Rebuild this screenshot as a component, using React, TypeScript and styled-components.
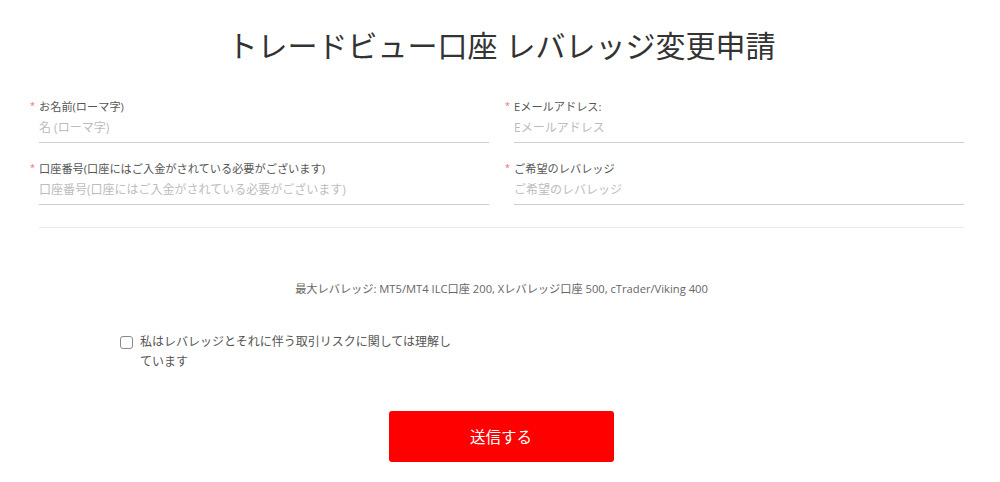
import React, { useState } from "react";
import styled, { createGlobalStyle } from "styled-components";

const GlobalStyle = createGlobalStyle`
  * {
    box-sizing: border-box;
  }
  body {
    margin: 0;
    background: #fff;
    font-family: "Open Sans", "Noto Sans CJK JP", sans-serif;
    color: #555;
  }
`;

const Page = styled.main`
  width: 1000px;
  padding: 24px 36px 20px 39px;
`;

const Title = styled.h1`
  margin: 0 0 30px;
  font-size: 30px;
  line-height: 44px;
  font-weight: 400;
  color: #333;
  text-align: center;
`;

const Grid = styled.div`
  display: grid;
  grid-template-columns: 450px 450px;
  column-gap: 25px;
  row-gap: 17px;
`;

const Field = styled.div`
  display: flex;
  flex-direction: column;
`;

const Label = styled.label`
  position: relative;
  font-size: 11.2px;
  line-height: 18px;
  color: #555;

  &::before {
    content: "*";
    position: absolute;
    left: -9px;
    top: -1px;
    color: #f26a6a;
    font-size: 9px;
  }
`;

const Input = styled.input`
  height: 27px;
  padding: 0 0 3px;
  border: none;
  border-bottom: 1px solid #cfcfcf;
  outline: none;
  font-family: inherit;
  font-size: 12px;
  color: #333;
  background: transparent;

  &::placeholder {
    color: #bcbcbc;
  }
`;

const Divider = styled.hr`
  margin: 22px 0 0;
  border: none;
  border-top: 1px solid #ebebeb;
`;

const Info = styled.p`
  margin: 53px 0 0;
  text-align: center;
  font-size: 11.2px;
  line-height: 16px;
  color: #666;
`;

const Agree = styled.label`
  display: flex;
  align-items: flex-start;
  gap: 7px;
  margin: 35px 0 0 81px;
  width: 340px;
  font-size: 12px;
  line-height: 20px;
  color: #555;
  cursor: pointer;
`;

const Box = styled.span<{ checked: boolean }>`
  flex: none;
  width: 13px;
  height: 13px;
  margin-top: 4px;
  border: 1px solid #8a8a8a;
  border-radius: 3px;
  background: ${(p) => (p.checked ? "#f00" : "#fff")};
`;

const HiddenCheck = styled.input`
  display: none;
`;

const Actions = styled.div`
  display: flex;
  justify-content: center;
  margin-top: 39px;
  padding-right: 1px;
`;

const Submit = styled.button`
  width: 225px;
  height: 51px;
  border: none;
  border-radius: 3px;
  background: #ff0000;
  color: #fff;
  font-family: inherit;
  font-size: 15.5px;
  cursor: pointer;
`;

const fields = [
  { label: "お名前(ローマ字)", placeholder: "名 (ローマ字)" },
  { label: "Eメールアドレス:", placeholder: "Eメールアドレス" },
  {
    label: "口座番号(口座にはご入金がされている必要がございます)",
    placeholder: "口座番号(口座にはご入金がされている必要がございます)",
  },
  { label: "ご希望のレバレッジ", placeholder: "ご希望のレバレッジ" },
];

const App = () => {
  const [agreed, setAgreed] = useState(false);

  return (
    <>
      <GlobalStyle />
      <Page>
        <Title>トレードビュー口座 レバレッジ変更申請</Title>
        <Grid>
          {fields.map((f) => (
            <Field key={f.label}>
              <Label>{f.label}</Label>
              <Input placeholder={f.placeholder} />
            </Field>
          ))}
        </Grid>
        <Divider />
        <Info>
          最大レバレッジ: MT5/MT4 ILC口座 200, Xレバレッジ口座 500, cTrader/Viking 400
        </Info>
        <Agree>
          <HiddenCheck
            type="checkbox"
            checked={agreed}
            onChange={() => setAgreed(!agreed)}
          />
          <Box checked={agreed} />
          <span>私はレバレッジとそれに伴う取引リスクに関しては理解しています</span>
        </Agree>
        <Actions>
          <Submit type="button">送信する</Submit>
        </Actions>
      </Page>
    </>
  );
};

export default App;
